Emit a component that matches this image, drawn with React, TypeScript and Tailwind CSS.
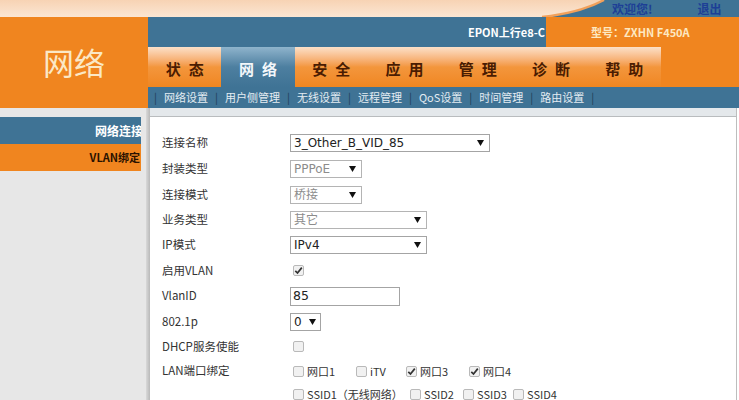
import React from "react";

const CJK = "font-['Noto_Sans_CJK_SC',sans-serif]";
const SELFONT = "font-['DejaVu_Sans','Noto_Sans_CJK_SC',sans-serif]";

function Arrow() {
  return (
    <svg width="7" height="6" viewBox="0 0 7 6" className="shrink-0">
      <path d="M0 0 H7 L3.5 6 Z" fill="#111" />
    </svg>
  );
}

function Sel({ w, text, disabled }: { w: string; text: string; disabled?: boolean }) {
  return (
    <div
      className={`${w} h-[18px] flex items-center justify-between bg-white border pl-[3px] pr-[5px] text-[12px] ${SELFONT} ${
        disabled ? "border-[#b4b4b4] text-[#8c8c8c]" : "border-[#a4a4a4] text-[#222]"
      }`}
    >
      <span className="leading-none">{text}</span>
      <Arrow />
    </div>
  );
}

function Check({ checked }: { checked?: boolean }) {
  return (
    <div className="w-[11px] h-[11px] shrink-0 rounded-[2px] border border-[#b9b9b9] bg-[#f1f1f1] flex items-center justify-center">
      {checked && (
        <svg width="9" height="9" viewBox="0 0 9 9">
          <path d="M1.3 4.8 L3.5 7 L7.8 1.6" stroke="#333" strokeWidth="1.7" fill="none" />
        </svg>
      )}
    </div>
  );
}

function Row({ h, label, children }: { h: string; label: string; children?: React.ReactNode }) {
  return (
    <div className={`${h} flex items-center`}>
      <div className={`w-[128px] shrink-0 text-[11.5px] text-[#333] ${CJK}`}>{label}</div>
      <div className="flex items-center">{children}</div>
    </div>
  );
}

const tabs = ["状态", "网络", "安全", "应用", "管理", "诊断", "帮助"];
const subs = ["网络设置", "用户侧管理", "无线设置", "远程管理", "QoS设置", "时间管理", "路由设置"];

export default function App() {
  return (
    <div className={`w-[739px] h-[400px] overflow-hidden bg-white flex flex-col ${CJK}`}>
      {/* top strip */}
      <div className="h-[17px] shrink-0 flex items-center bg-[#3f7395]">
        <svg width="606" height="17" viewBox="0 0 606 17" className="shrink-0">
          <defs>
            <linearGradient id="pg" x1="0" y1="0" x2="0" y2="1">
              <stop offset="0" stopColor="#f7d3b4" />
              <stop offset="1" stopColor="#fbe6d3" />
            </linearGradient>
          </defs>
          <path d="M0 0 H604 Q580 13 542 17 H0 Z" fill="url(#pg)" />
          <path d="M604 0 Q580 13 542 17" stroke="#f2a05a" strokeWidth="2.5" fill="none" />
        </svg>
        <span className="ml-[6px] text-[12px] font-bold text-[#1d3f96] leading-none">欢迎您!</span>
        <span className="ml-[45px] text-[12px] font-bold text-[#1d3f96] leading-none">退出</span>
      </div>

      {/* header */}
      <div className="h-[91px] shrink-0 flex">
        <div className="w-[148px] shrink-0 bg-[#f0851f] flex items-center justify-center pb-[2px]">
          <span className="text-[31px] text-[#fbe8c6] leading-none">网络</span>
        </div>
        <div className="flex-1 flex flex-col">
          <div className="h-[30px] flex">
            <div className="flex-1 bg-[#3f7395] flex items-center justify-end pr-[1px]">
              <span className="text-[11px] font-bold text-white leading-none">EPON上行e8-C</span>
            </div>
            <div className="w-[193px] bg-[#f0851f] flex items-center pl-[45px]">
              <span className="text-[11px] font-bold text-[#fde8c2] leading-none">型号：ZXHN F450A</span>
            </div>
          </div>
          <div className="h-[40px] flex bg-[#3f7395]">
            <div className="w-[513px] flex">
              {tabs.map((t, i) => (
                <div
                  key={t}
                  className={`flex-1 flex items-center justify-center ${
                    i === 1
                      ? "bg-gradient-to-b from-[#8fb4cc] via-[#4d7fa0] to-[#3f7395] text-[#f3f7fa]"
                      : "bg-gradient-to-b from-[#fbe0c8] via-[#f3963c] to-[#f0861f] text-[#4a1c02]"
                  }`}
                >
                  <span className="text-[15px] font-bold tracking-[8px] pl-[8px] pt-[2px] leading-none">{t}</span>
                </div>
              ))}
            </div>
            <div className="flex-1 bg-[#f0851f]" />
          </div>
          <div className="h-[21px] flex items-center bg-[#3f7395] pl-[6px] text-[11px] text-[#e4ecf2] leading-none">
            <span className="text-[#1e3d55]">|</span>
            {subs.map((s) => (
              <React.Fragment key={s}>
                <span className="px-[7px]">{s}</span>
                <span className="text-[#1e3d55]">|</span>
              </React.Fragment>
            ))}
          </div>
        </div>
      </div>

      {/* body */}
      <div className="flex-1 flex min-h-0">
        <div className="w-[146px] shrink-0 bg-[#e7e7e7] pt-[9px] flex flex-col">
          <div className="w-[141px] h-[27px] bg-[#3f7395] flex items-center justify-end overflow-hidden">
            <span className="text-[12px] font-bold text-white leading-none whitespace-nowrap -mr-[2px]">网络连接</span>
          </div>
          <div className="w-[141px] h-[27px] bg-[#f0851f] flex items-center justify-end pr-[1px]">
            <span className="text-[11px] font-bold text-[#2a1200] leading-none whitespace-nowrap">VLAN绑定</span>
          </div>
        </div>
        <div className="w-[4px] shrink-0 bg-gradient-to-r from-[#d9d9d9] to-[#b9b9b9]" />
        <div className="flex-1 flex flex-col border-r border-[#bdbdbd] mr-[2px]">
          <div className="h-[9px] shrink-0 bg-[#e4e8eb] border-b border-[#b9bcbe]" />
          <div className="pt-[13px] pl-[12px] flex flex-col">
            <Row h="h-[26px]" label="连接名称">
              <Sel w="w-[200px]" text="3_Other_B_VID_85" />
            </Row>
            <Row h="h-[26px]" label="封装类型">
              <Sel w="w-[72px]" text="PPPoE" disabled />
            </Row>
            <Row h="h-[25px]" label="连接模式">
              <Sel w="w-[72px]" text="桥接" disabled />
            </Row>
            <Row h="h-[25px]" label="业务类型">
              <Sel w="w-[137px]" text="其它" disabled />
            </Row>
            <Row h="h-[26px]" label="IP模式">
              <Sel w="w-[137px]" text="IPv4" />
            </Row>
            <Row h="h-[25px]" label="启用VLAN">
              <div className="pl-[3px]">
                <Check checked />
              </div>
            </Row>
            <Row h="h-[26px]" label="VlanID">
              <div className={`w-[110px] h-[19px] border border-[#a4a4a4] bg-white flex items-center pl-[2px] text-[12.5px] text-[#222] ${SELFONT}`}>
                85
              </div>
            </Row>
            <Row h="h-[25px]" label="802.1p">
              <div className={`w-[31px] h-[18px] flex items-center justify-between bg-white border border-[#a4a4a4] pl-[3px] pr-[4px] text-[12px] text-[#222] ${SELFONT}`}>
                <span className="leading-none">0</span>
                <Arrow />
              </div>
            </Row>
            <Row h="h-[25px]" label="DHCP服务使能">
              <div className="pl-[3px]">
                <Check />
              </div>
            </Row>
            <Row h="h-[24px]" label="LAN端口绑定">
              <div className="pl-[3px] flex items-center text-[11px] text-[#333]">
                <Check />
                <span className="ml-[3px] w-[49px]">网口1</span>
                <Check />
                <span className="ml-[3px] w-[36px]">iTV</span>
                <Check checked />
                <span className="ml-[3px] w-[49px]">网口3</span>
                <Check checked />
                <span className="ml-[3px]">网口4</span>
              </div>
            </Row>
            <Row h="h-[22px]" label="">
              <div className="pl-[3px] flex items-center text-[11px] text-[#333]">
                <Check />
                <span className="ml-[3px] w-[103px]">SSID1（无线网络）</span>
                <Check />
                <span className="ml-[3px] w-[39px]">SSID2</span>
                <Check />
                <span className="ml-[3px] w-[36px]">SSID3</span>
                <Check />
                <span className="ml-[3px]">SSID4</span>
              </div>
            </Row>
          </div>
        </div>
      </div>
    </div>
  );
}
